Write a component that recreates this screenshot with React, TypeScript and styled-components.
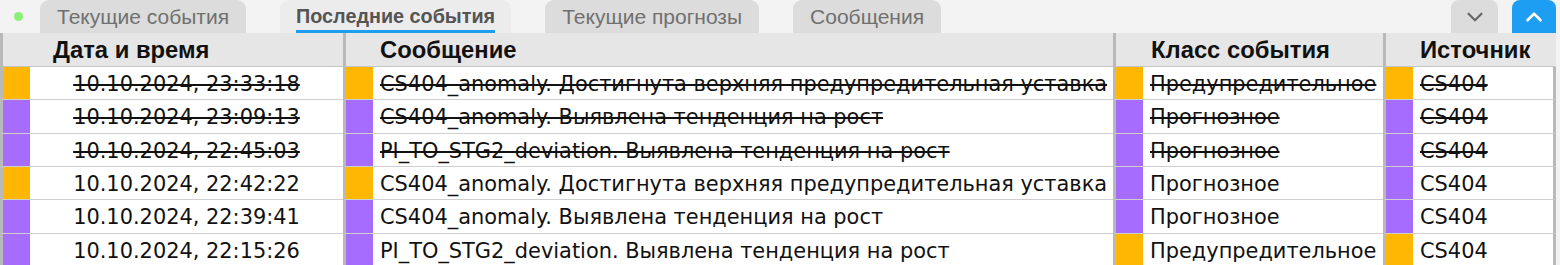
import React from "react";
import styled, { createGlobalStyle, css } from "styled-components";
import { ChevronDown, ChevronUp } from "lucide-react";

const GlobalStyle = createGlobalStyle`
  html, body { margin: 0; padding: 0; background: #f3f3f3; }
  * { box-sizing: border-box; }
`;

const Page = styled.div`
  width: 1560px;
  height: 265px;
  overflow: hidden;
  background: #f3f3f3;
  display: flex;
  flex-direction: column;
`;

const TabBar = styled.div`
  height: 33px;
  display: flex;
  align-items: flex-end;
  padding-left: 14px;
`;

const Dot = styled.span`
  width: 9px;
  height: 9px;
  border-radius: 50%;
  background: #8cef78;
  align-self: center;
  margin-right: 17px;
`;

const Tabs = styled.div`
  display: flex;
  gap: 34px;
  height: 33px;
`;

const Tab = styled.div<{ $active?: boolean }>`
  height: 33px;
  padding: 0 17px;
  display: flex;
  align-items: center;
  border-radius: 9px 9px 0 0;
  font-family: "Liberation Sans", Arial, sans-serif;
  font-size: 21px;
  color: #707070;
  background: #dcdcdc;
  ${(p) =>
    p.$active &&
    css`
      padding: 0 16px;
      background: #ececec;
      color: #555;
      font-weight: 700;
      font-size: 19.8px;
    `}
`;

const TabLabel = styled.span<{ $active?: boolean }>`
  position: relative;
  ${(p) =>
    p.$active &&
    css`
      &::after {
        content: "";
        position: absolute;
        left: 0;
        right: 0;
        bottom: -5px;
        height: 3px;
        background: #1e9ef0;
      }
    `}
`;

const Spacer = styled.div`
  flex: 1;
`;

const IconButton = styled.button<{ $primary?: boolean }>`
  height: 33px;
  width: ${(p) => (p.$primary ? 44 : 47)}px;
  margin-right: ${(p) => (p.$primary ? 4 : 14)}px;
  border: none;
  border-radius: 8px 8px 0 0;
  display: flex;
  align-items: center;
  justify-content: center;
  padding: 0;
  background: ${(p) => (p.$primary ? "#1e9ef2" : "#dcdcdc")};
  color: ${(p) => (p.$primary ? "#ffffff" : "#666")};
`;

const Table = styled.div`
  width: 1556px;
  display: grid;
  grid-template-columns: 343px 770px 270px 173px;
  background: #ffffff;
`;

const HeadCell = styled.div<{ $pad: number }>`
  height: 34px;
  background: #e6e6e6;
  border-left: 3px solid #b9b9b9;
  border-bottom: 1px solid #c4c4c4;
  display: flex;
  align-items: center;
  padding-left: ${(p) => p.$pad}px;
  font-family: "Liberation Sans", Arial, sans-serif;
  font-weight: 700;
  font-size: 23.8px;
  color: #111;
  &:last-child {
    border-right: 3px solid #b9b9b9;
  }
`;

const Cell = styled.div<{ $struck?: boolean; $last?: boolean }>`
  height: 33.34px;
  border-left: 3px solid #b9b9b9;
  border-bottom: 1px solid #cfcfcf;
  display: flex;
  align-items: stretch;
  font-family: "DejaVu Sans", sans-serif;
  font-size: 20.9px;
  color: #111;
  ${(p) =>
    p.$last &&
    css`
      border-right: 3px solid #b9b9b9;
    `}
  ${(p) =>
    p.$struck &&
    css`
      text-decoration: line-through;
    `}
`;

const Marker = styled.span<{ $color: string }>`
  width: 27px;
  flex: none;
  background: ${(p) => p.$color};
`;

const CellText = styled.span<{ $center?: boolean }>`
  flex: 1;
  display: flex;
  align-items: center;
  padding-top: 2px;
  white-space: nowrap;
  overflow: hidden;
  padding-left: ${(p) => (p.$center ? 0 : 7)}px;
  justify-content: ${(p) => (p.$center ? "center" : "flex-start")};
`;

const ORANGE = "#ffb703";
const PURPLE = "#a66cfd";

type Row = {
  date: string;
  msg: string;
  cls: string;
  src: string;
  c1: string;
  c3: string;
  struck: boolean;
};

const rows: Row[] = [
  { date: "10.10.2024, 23:33:18", msg: "CS404_anomaly. Достигнута верхняя предупредительная уставка", cls: "Предупредительное", src: "CS404", c1: ORANGE, c3: ORANGE, struck: true },
  { date: "10.10.2024, 23:09:13", msg: "CS404_anomaly. Выявлена тенденция на рост", cls: "Прогнозное", src: "CS404", c1: PURPLE, c3: PURPLE, struck: true },
  { date: "10.10.2024, 22:45:03", msg: "PI_TO_STG2_deviation. Выявлена тенденция на рост", cls: "Прогнозное", src: "CS404", c1: PURPLE, c3: PURPLE, struck: true },
  { date: "10.10.2024, 22:42:22", msg: "CS404_anomaly. Достигнута верхняя предупредительная уставка", cls: "Прогнозное", src: "CS404", c1: ORANGE, c3: PURPLE, struck: false },
  { date: "10.10.2024, 22:39:41", msg: "CS404_anomaly. Выявлена тенденция на рост", cls: "Прогнозное", src: "CS404", c1: PURPLE, c3: PURPLE, struck: false },
  { date: "10.10.2024, 22:15:26", msg: "PI_TO_STG2_deviation. Выявлена тенденция на рост", cls: "Предупредительное", src: "CS404", c1: PURPLE, c3: ORANGE, struck: false },
];

const tabs = ["Текущие события", "Последние события", "Текущие прогнозы", "Сообщения"];

export default function App() {
  return (
    <Page>
      <GlobalStyle />
      <TabBar>
        <Dot />
        <Tabs>
          {tabs.map((t, i) => (
            <Tab key={t} $active={i === 1}>
              <TabLabel $active={i === 1}>{t}</TabLabel>
            </Tab>
          ))}
        </Tabs>
        <Spacer />
        <IconButton>
          <ChevronDown size={26} strokeWidth={2} />
        </IconButton>
        <IconButton $primary>
          <ChevronUp size={26} strokeWidth={2.4} />
        </IconButton>
      </TabBar>
      <Table>
        <HeadCell $pad={50}>Дата и время</HeadCell>
        <HeadCell $pad={34}>Сообщение</HeadCell>
        <HeadCell $pad={35}>Класс события</HeadCell>
        <HeadCell $pad={34}>Источник</HeadCell>
        {rows.map((r, i) => (
          <React.Fragment key={i}>
            <Cell $struck={r.struck}>
              <Marker $color={r.c1} />
              <CellText $center>{r.date}</CellText>
            </Cell>
            <Cell $struck={r.struck}>
              <Marker $color={r.c1} />
              <CellText>{r.msg}</CellText>
            </Cell>
            <Cell $struck={r.struck}>
              <Marker $color={r.c3} />
              <CellText>{r.cls}</CellText>
            </Cell>
            <Cell $struck={r.struck} $last>
              <Marker $color={r.c3} />
              <CellText>{r.src}</CellText>
            </Cell>
          </React.Fragment>
        ))}
      </Table>
    </Page>
  );
}
